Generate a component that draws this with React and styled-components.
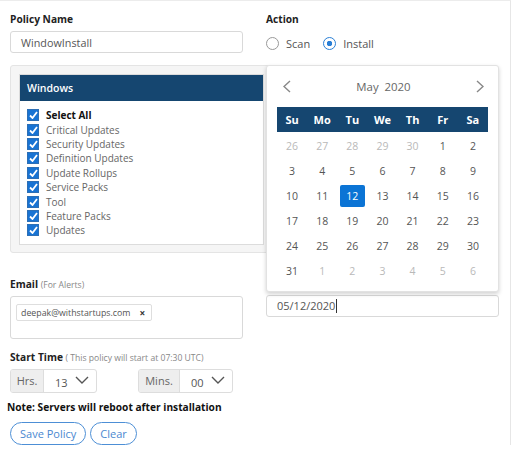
import React from 'react';
import styled, { createGlobalStyle } from 'styled-components';

const Global = createGlobalStyle`
  body {
    margin: 0;
    background: #fff;
    font-family: "Open Sans", "Noto Sans", sans-serif;
    color: #555;
  }
`;

const Page = styled.div`
  width: 511px;
  height: 445px;
  border-top: 1px solid #ececec;
  border-right: 1px solid #e6e6e6;
  box-sizing: border-box;
  padding: 10px 0 0 10px;
`;

const Grid = styled.div`
  display: grid;
  grid-template-columns: 233px 233px;
  column-gap: 23px;
`;

const Field = styled.div`
  display: flex;
  flex-direction: column;
  position: relative;
`;

const Label = styled.div`
  font-size: 10.2px;
  font-weight: 700;
  color: #222;
  line-height: 16px;
  margin-bottom: ${p => p.$gap || 4}px;
  small {
    font-weight: 400;
    font-size: 8.6px;
    color: #888;
  }
`;

const TextInput = styled.div`
  height: 22px;
  box-sizing: border-box;
  border: 1px solid #d9d9d9;
  border-radius: 3px;
  padding-left: 10px;
  font-size: ${p => p.$size || 10.8}px;
  color: #555;
  display: flex;
  align-items: center;
`;

const Caret = styled.span`
  display: inline-block;
  width: 1px;
  height: 14px;
  background: #333;
  margin-left: 1px;
`;

const RadioRow = styled.div`
  display: flex;
  align-items: center;
  gap: 13px;
  font-size: 11px;
  color: #555;
  margin-top: 6px;
`;

const Radio = styled.label`
  display: flex;
  align-items: center;
  gap: 7px;
  &::before {
    content: '';
    width: 13px;
    height: 13px;
    box-sizing: border-box;
    border-radius: 50%;
    border: 1px solid ${p => (p.$on ? '#2a7fd6' : '#999')};
    background: ${p => (p.$on ? 'radial-gradient(circle, #2a7fd6 0 2.5px, #fff 3px)' : '#fff')};
  }
`;

const Panel = styled.div`
  grid-column: 1 / -1;
  width: 263px;
  box-sizing: border-box;
  margin-top: 12px;
  background: #f5f5f5;
  border: 1px solid #e4e4e4;
  border-radius: 3px;
  padding: 8px 8px 7px 8px;
`;

const Box = styled.div`
  background: #fff;
  border: 1px solid #dcdcdc;
  padding-bottom: 6px;
`;

const BoxHead = styled.div`
  background: #154670;
  color: #fff;
  font-size: 10.5px;
  font-weight: 600;
  height: 26px;
  display: flex;
  align-items: center;
  padding-left: 7px;
`;

const List = styled.ul`
  list-style: none;
  margin: 0;
  padding: 7px 0 0 7px;
`;

const Item = styled.li`
  display: flex;
  align-items: center;
  gap: 7px;
  height: 14.4px;
  font-size: 10px;
  color: ${p => (p.$bold ? '#111' : '#666')};
  font-weight: ${p => (p.$bold ? 700 : 400)};
`;

const Check = styled.span`
  width: 12px;
  height: 12px;
  background: #1873d3;
  border: 1px solid #2d6fb5;
  box-sizing: border-box;
  display: flex;
  align-items: center;
  justify-content: center;
`;

const Popup = styled.div`
  position: absolute;
  left: 0;
  bottom: calc(100% + 3px);
  width: 233px;
  height: 227px;
  box-sizing: border-box;
  background: #fff;
  border: 1px solid #e2e2e2;
  border-radius: 3px;
  box-shadow: 0 2px 4px rgba(0, 0, 0, 0.18);
  padding: 0 10px;
  z-index: 2;
`;

const Nav = styled.div`
  height: 41px;
  display: flex;
  align-items: center;
  justify-content: space-between;
  padding: 0 4px 0 6px;
  font-size: 11.4px;
  color: #666;
`;

const DayHead = styled.div`
  display: grid;
  grid-template-columns: repeat(7, 1fr);
  background: #154670;
  height: 25px;
  align-items: center;
  text-align: center;
  color: #fff;
  font-size: 11px;
  font-weight: 700;
`;

const Days = styled.div`
  display: grid;
  grid-template-columns: repeat(7, 1fr);
  grid-auto-rows: 25px;
  align-items: center;
  justify-items: center;
  padding-top: 2px;
`;

const Day = styled.span`
  width: 25px;
  height: 22px;
  border-radius: 2px;
  display: flex;
  align-items: center;
  justify-content: center;
  font-size: 10.5px;
  color: ${p => (p.$sel ? '#fff' : p.$muted ? '#b9b9b9' : '#555')};
  background: ${p => (p.$sel ? '#0b74d5' : 'transparent')};
`;

const EmailBox = styled.div`
  height: 43px;
  box-sizing: border-box;
  border: 1px solid #d9d9d9;
  border-radius: 3px;
  padding: 2px 5px;
`;

const Chip = styled.span`
  display: inline-flex;
  align-items: center;
  gap: 9px;
  height: 15px;
  padding: 0 6px 0 4px;
  border: 1px solid #dedede;
  border-radius: 2px;
  font-size: 8.8px;
  color: #555;
  b {
    font-size: 10px;
    color: #333;
  }
`;

const Section = styled.div`
  margin-top: ${p => p.$top || 0}px;
`;

const TimeRow = styled.div`
  display: flex;
  gap: 41px;
`;

const Group = styled.div`
  display: flex;
  height: 24px;
  width: ${p => p.$w}px;
  box-sizing: border-box;
  border: 1px solid #ddd;
  border-radius: 3px;
  overflow: hidden;
`;

const Addon = styled.span`
  width: ${p => p.$w}px;
  background: #eeeeee;
  border-right: 1px solid #ddd;
  display: flex;
  align-items: center;
  justify-content: center;
  font-size: 11px;
  color: #666;
`;

const SelectVal = styled.span`
  flex: 1;
  display: flex;
  align-items: center;
  justify-content: space-between;
  padding: 4px 7px 0 11px;
  font-size: 11px;
  color: #555;
  svg {
    margin-top: -6px;
  }
`;

const Note = styled.div`
  margin: 7px 0 0 -3px;
  font-size: 10.2px;
  font-weight: 700;
  color: #111;
`;

const Buttons = styled.div`
  display: flex;
  gap: 4px;
  margin-top: 8px;
`;

const Pill = styled.button`
  height: 23px;
  padding: 0 9px;
  border: 1px solid #4d8fd6;
  border-radius: 12px;
  background: #fff;
  color: #4a88d0;
  font-family: inherit;
  font-size: 11px;
`;

const Chevron = ({ dir }) => (
  <svg width="8" height="13" viewBox="0 0 8 13">
    <polyline
      points={dir === 'left' ? '7,1 1,6.5 7,12' : '1,1 7,6.5 1,12'}
      fill="none"
      stroke="#888"
      strokeWidth="1.4"
    />
  </svg>
);

const Down = () => (
  <svg width="14" height="8" viewBox="0 0 14 8">
    <polyline points="1,1 7,7 13,1" fill="none" stroke="#555" strokeWidth="1.4" />
  </svg>
);

const Tick = () => (
  <svg width="9" height="8" viewBox="0 0 9 8">
    <polyline points="1,4.5 3.5,7 8,1" fill="none" stroke="#fff" strokeWidth="1.8" />
  </svg>
);

const items = [
  'Critical Updates',
  'Security Updates',
  'Definition Updates',
  'Update Rollups',
  'Service Packs',
  'Tool',
  'Feature Packs',
  'Updates',
];

const cells = [
  [26, 1], [27, 1], [28, 1], [29, 1], [30, 1], [1], [2],
  [3], [4], [5], [6], [7], [8], [9],
  [10], [11], [12], [13], [14], [15], [16],
  [17], [18], [19], [20], [21], [22], [23],
  [24], [25], [26], [27], [28], [29], [30],
  [31], [1, 1], [2, 1], [3, 1], [4, 1], [5, 1], [6, 1],
];

export default function App() {
  return (
    <Page>
      <Global />
      <Grid>
        <Field>
          <Label>Policy Name</Label>
          <TextInput>WindowInstall</TextInput>
        </Field>
        <Field>
          <Label $gap={3}>Action</Label>
          <RadioRow>
            <Radio>Scan</Radio>
            <Radio $on>Install</Radio>
          </RadioRow>
        </Field>

        <Panel>
          <Box>
            <BoxHead>Windows</BoxHead>
            <List>
              <Item $bold>
                <Check><Tick /></Check>Select All
              </Item>
              {items.map(t => (
                <Item key={t}>
                  <Check><Tick /></Check>
                  {t}
                </Item>
              ))}
            </List>
          </Box>
        </Panel>

        <Field style={{ marginTop: 23 }}>
          <Label $gap={3}>
            Email <small>(For Alerts)</small>
          </Label>
          <EmailBox>
            <Chip>
              deepak@withstartups.com <b>×</b>
            </Chip>
          </EmailBox>
        </Field>
        <Field style={{ marginTop: 42 }}>
          <Popup>
            <Nav>
              <Chevron dir="left" />
              <span>May&nbsp; 2020</span>
              <Chevron dir="right" />
            </Nav>
            <DayHead>
              {['Su', 'Mo', 'Tu', 'We', 'Th', 'Fr', 'Sa'].map(d => (
                <span key={d}>{d}</span>
              ))}
            </DayHead>
            <Days>
              {cells.map(([n, m], i) => (
                <Day key={i} $muted={m} $sel={i === 16}>
                  {n}
                </Day>
              ))}
            </Days>
          </Popup>
          <TextInput $size={11}>
            05/12/2020<Caret />
          </TextInput>
        </Field>
      </Grid>

      <Section $top={10}>
        <Label $gap={3}>
          Start Time <small>( This policy will start at 07:30 UTC)</small>
        </Label>
        <TimeRow>
          <Group $w={87}>
            <Addon $w={32}>Hrs.</Addon>
            <SelectVal>
              13 <Down />
            </SelectVal>
          </Group>
          <Group $w={95}>
            <Addon $w={40}>Mins.</Addon>
            <SelectVal>
              00 <Down />
            </SelectVal>
          </Group>
        </TimeRow>
      </Section>

      <Note>Note: Servers will reboot after installation</Note>
      <Buttons>
        <Pill>Save Policy</Pill>
        <Pill>Clear</Pill>
      </Buttons>
    </Page>
  );
}
